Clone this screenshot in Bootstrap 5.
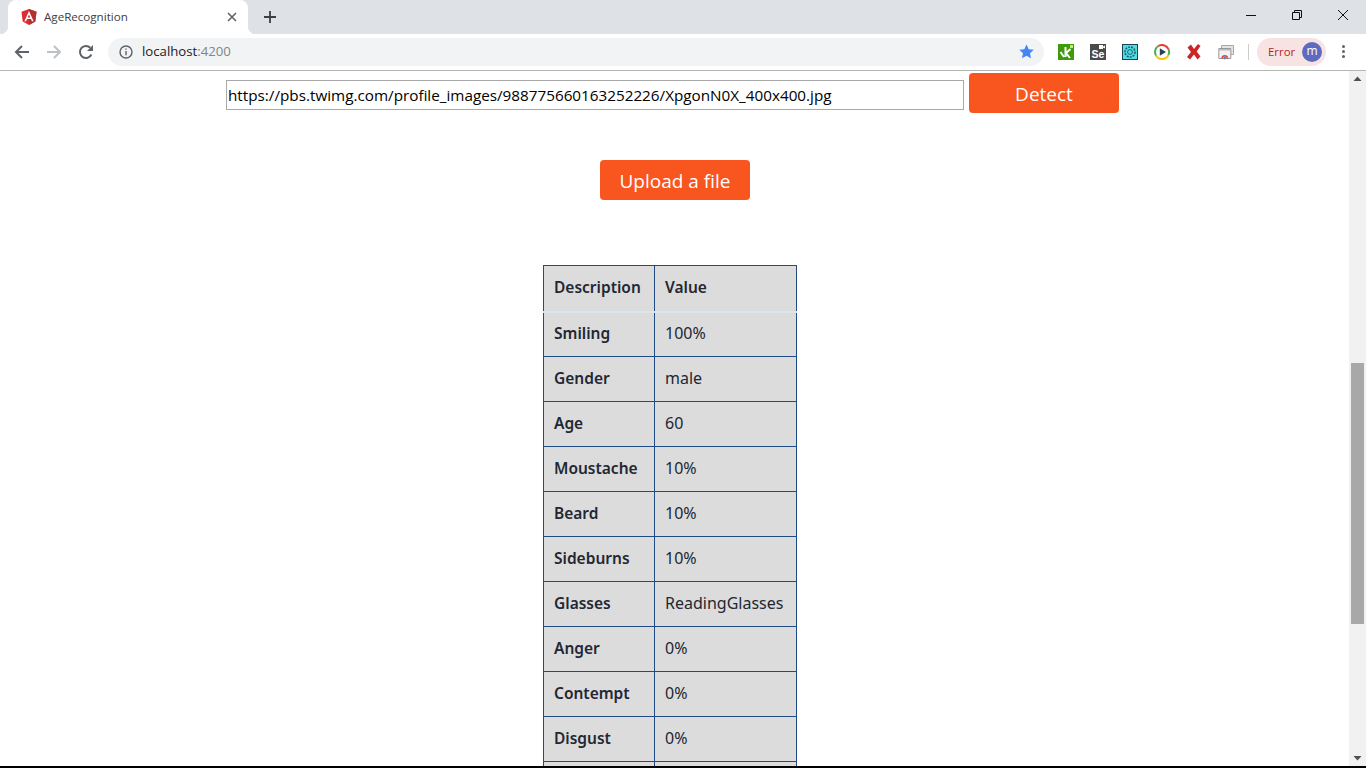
<!DOCTYPE html>
<html lang="en">
<head>
    <meta charset="UTF-8">
    <meta name="viewport" content="width=device-width, initial-scale=1.0">
    <title>AgeRecognition</title>
    <link href="https://cdn.jsdelivr.net/npm/bootstrap@5.3.0/dist/css/bootstrap.min.css" rel="stylesheet">
    <style>
        html, body { height: 768px; overflow: hidden; background: #fff; }
        body { font-family: "Open Sans", "Liberation Sans", sans-serif; }
        .tab-strip { height: 34px; background: #dee1e6; padding-left: 8px; }
        .tab-live { position: relative; width: 240px; height: 34px; background: #fff; border-radius: 8px 8px 0 0; padding: 0 11px 0 13px; font-size: 11.6px; color: #3c4043; }
        .tab-live::before, .tab-live::after { content: ""; position: absolute; bottom: 0; width: 8px; height: 8px; }
        .tab-live::before { left: -8px; background: radial-gradient(circle at 0 0, #dee1e6 8px, #fff 8.5px); }
        .tab-live::after { right: -8px; background: radial-gradient(circle at 100% 0, #dee1e6 8px, #fff 8.5px); }
        .tab-title { margin-left: 7px; }
        .tab-new { margin-left: 15px; }
        .win-btns { margin-left: auto; padding-right: 18px; gap: 36px; height: 30px; }
        .tool-bar { height: 37px; background: #fff; border-bottom: 1px solid #b5b5b5; padding: 0 0 1px 14px; }
        .nav-ico { width: 16px; height: 16px; margin-right: 16px; }
        .omni { width: 936px; height: 28px; margin-left: -2px; background: #f1f3f4; border-radius: 14px; padding: 0 10px 0 11px; font-size: 13.2px; color: #202124; }
        .omni-host { margin-left: 9px; }
        .omni-port { color: #80868b; }
        .omni-star { margin-left: auto; }
        .ext-row { margin-left: 14px; gap: 16px; }
        .ext-ico { width: 16px; height: 16px; display: block; }
        .ext-se { background: #4a4a4a; color: #fff; font: 700 10.5px/10px "Liberation Sans", sans-serif; text-align: center; padding-top: 1px; }
        .ext-cam { display: block; margin-left: auto; margin-right: 1px; }
        .tool-sep { width: 1px; height: 16px; background: #ccc; margin-left: 14px; }
        .err-pill { width: 69px; height: 28px; margin-left: 8px; background: #f8e3e3; border-radius: 14px; padding: 0 4px 0 11px; font-size: 11.4px; color: #b3261e; }
        .avatar { width: 20px; height: 20px; margin-left: auto; border-radius: 50%; background: #5c6bc0; color: #fff; font-size: 12px; line-height: 18px; text-align: center; }
        .menu-dots { margin-left: 16px; gap: 2px; }
        .menu-dots span { width: 3px; height: 3px; border-radius: 50%; background: #5f6368; }
        .view-area { height: 695px; overflow: hidden; }
        .page-body { width: 1349px; height: 695px; overflow: hidden; }
        .url-row { padding: 2px 0 0 226px; gap: 5px; }
        .url-input { width: 738px; height: 30px; margin-top: 7px; border: 1px solid #a9a9a9; padding: 0 1px; font-family: "Open Sans", sans-serif; font-size: 15.25px; color: #000; outline: 0; }
        .act-btn { width: 150px; height: 40px; padding: 2px 0 0; background: #f8551f; border: 0; border-radius: 4px; color: #fff; font-family: "Open Sans", sans-serif; font-size: 19px; line-height: 38px; }
        .upload-row { margin-top: 47px; padding-left: 1px; }
        .face-table { margin: 65px 0 0 543px; width: 254px; table-layout: fixed; border-collapse: collapse; font-family: "Noto Sans", sans-serif; font-size: 15.5px; color: #222733; }
        .face-table th, .face-table td { height: 45px; padding: 0 10px; background: #dcdcdc; border: 1px solid #1f4b87; white-space: nowrap; }
        .face-table th { font-weight: 600; }
        .face-table td { font-weight: 400; font-size: 16px; padding-bottom: 2px; }
        .face-table thead th { height: 46px; padding-bottom: 2px; border-bottom: 2px solid #dde5ec; }
        .face-table tbody tr:first-child th { padding-bottom: 2px; }
        .col-one { width: 111px; }
        .scroll-bar { width: 17px; background: #f1f1f1; padding: 0 2px; }
        .scroll-up, .scroll-down { height: 17px; }
        .scroll-gap { height: 275px; }
        .scroll-thumb { height: 261px; background: #a8a8a8; }
        .scroll-down { margin-top: auto; }
        .base-line { height: 2px; background: #000; }
    </style>
</head>
<body>
    <!-- browser tabs -->
    <div class="tab-strip d-flex align-items-start">
        <div class="tab-live d-flex align-items-center">
            <svg width="16" height="16" viewBox="0 0 16 16"><path fill="#dd2c35" d="M8 0 .5 2.7l1.2 9.9L8 16l6.3-3.4 1.2-9.9z"/><path fill="#b52e31" d="M8 0v16l6.3-3.4 1.2-9.9z"/><path fill="#fff" d="M8 2 3.4 12.2h1.7l.9-2.3h4l.9 2.3h1.7zm1.3 6.5H6.7L8 5.4z"/></svg>
            <span class="tab-title">AgeRecognition</span>
            <svg class="ms-auto" width="10" height="10" viewBox="0 0 10 10"><path stroke="#5f6368" stroke-width="1.6" d="m1 1 8 8M9 1 1 9"/></svg>
        </div>
        <svg class="tab-new mt-2" width="14" height="18" viewBox="0 0 14 18"><path stroke="#3c4043" stroke-width="1.8" d="M7 3v12M1 9h12"/></svg>
        <div class="win-btns d-flex align-items-center">
            <svg width="10" height="10" viewBox="0 0 10 10"><path stroke="#111" d="M0 5.5h10"/></svg>
            <svg width="10" height="10" viewBox="0 0 10 10"><path fill="none" stroke="#111" d="M.5 2.5h7v7h-7zM2.5 2.5v-2h7v7h-2"/></svg>
            <svg width="10" height="10" viewBox="0 0 10 10"><path stroke="#111" d="m0 0 10 10M10 0 0 10"/></svg>
        </div>
    </div>

    <!-- toolbar -->
    <div class="tool-bar d-flex align-items-center">
        <svg class="nav-ico" viewBox="0 0 16 16"><path fill="none" stroke="#5f6368" stroke-width="2" d="M15 8H2M8 2 2 8l6 6"/></svg>
        <svg class="nav-ico" viewBox="0 0 16 16"><path fill="none" stroke="#bdc1c6" stroke-width="2" d="M1 8h13M8 2l6 6-6 6"/></svg>
        <svg class="nav-ico" viewBox="0 0 16 16"><path fill="none" stroke="#5f6368" stroke-width="2" d="M13.4 10.5A6 6 0 1 1 12.3 3.8"/><path fill="#5f6368" d="M15 1v6H9z"/></svg>
        <div class="omni d-flex align-items-center">
            <svg width="14" height="14" viewBox="0 0 14 14"><circle cx="7" cy="7" r="6" fill="none" stroke="#5f6368" stroke-width="1.4"/><path stroke="#5f6368" stroke-width="1.4" d="M7 6v4.2M7 3.4v1.4"/></svg>
            <span class="omni-host">localhost<span class="omni-port">:4200</span></span>
            <svg class="omni-star" width="15" height="15" viewBox="0 0 16 16"><path fill="#4285f4" d="m8 .5 2.3 5 5.4.6-4 3.7 1.1 5.4L8 12.5l-4.8 2.7 1.1-5.4-4-3.7 5.4-.6z"/></svg>
        </div>
        <div class="ext-row d-flex align-items-center">
            <svg class="ext-ico" viewBox="0 0 16 16"><rect width="16" height="16" fill="#3f9a0e"/><path fill="none" stroke="#fff" stroke-width="2" d="m2.5 8 3.5 5M7.5 3v10M12.5 5 8 9l4 5"/><rect x="12" y="1" width="3" height="3" fill="#b8f26a"/></svg>
            <div class="ext-ico ext-se">
                <svg class="ext-cam" width="6" height="4" viewBox="0 0 6 4"><path fill="#fff" d="M0 0h4v4H0zM4 1.500 6 .5v3L4 2.500z"/></svg>
                Se
            </div>
            <svg class="ext-ico" viewBox="0 0 16 16"><rect x=".5" y=".5" width="15" height="15" fill="#4fdde6" stroke="#1c3f4f"/><circle cx="8" cy="8" r="5" fill="none" stroke="#1f5f6f" stroke-width="1.6" stroke-dasharray="2 1"/><circle cx="8" cy="8" r="2.4" fill="none" stroke="#1f5f6f"/></svg>
            <svg class="ext-ico" viewBox="0 0 16 16"><path fill="none" stroke="#e94235" stroke-width="2" d="M4 2.3A7 7 0 0 1 14.4 5"/><path fill="none" stroke="#f9c80e" stroke-width="2" d="M14.4 11A7 7 0 0 1 2 11.5"/><path fill="none" stroke="#4caf50" stroke-width="2" d="M2 11.5A7 7 0 0 1 4 2.3M14.4 5a7 7 0 0 1 0 6"/><path fill="#2d4159" d="M5.800 4.200 12 8l-6.200 3.800z"/></svg>
            <svg class="ext-ico" viewBox="0 0 16 16"><path fill="#cc2427" d="M1.500 3.500 5 .5l3 4.500 4-5 2.500 2-3.800 5.500 3.800 5-3 3L8 10.500 4 15.500l-3-2.500 4-5z"/></svg>
            <svg class="ext-ico" viewBox="0 0 16 16"><path fill="#e4e4e4" stroke="#a8a8a8" d="M3.500 1.500h12v9h-12z"/><path fill="#f2f2f2" stroke="#999" d="M.8 4.500h12v10h-12z"/><path fill="#bbb" d="M1 5h11.500v1.500H1z"/><path fill="#e94235" d="M3.300 14.500a3.500 3.500 0 0 1 7 0H8.700a1.900 1.900 0 0 0-3.800 0z"/><circle cx="6.800" cy="14" r="1.400" fill="#4285f4"/></svg>
        </div>
        <div class="tool-sep"></div>
        <div class="err-pill d-flex align-items-center">
            <span>Error</span>
            <span class="avatar">m</span>
        </div>
        <div class="menu-dots d-flex flex-column">
            <span></span><span></span><span></span>
        </div>
    </div>

    <!-- page -->
    <div class="view-area d-flex">
        <div class="page-body">
            <div class="url-row d-flex align-items-start">
                <input class="url-input" type="text" value="https://pbs.twimg.com/profile_images/988775660163252226/XpgonN0X_400x400.jpg">
                <button class="act-btn" type="button">Detect</button>
            </div>
            <div class="upload-row d-flex justify-content-center">
                <button class="act-btn" type="button">Upload a file</button>
            </div>
            <table class="face-table">
                <thead>
                    <tr><th class="col-one">Description</th><th>Value</th></tr>
                </thead>
                <tbody>
                    <tr><th>Smiling</th><td>100%</td></tr>
                    <tr><th>Gender</th><td>male</td></tr>
                    <tr><th>Age</th><td>60</td></tr>
                    <tr><th>Moustache</th><td>10%</td></tr>
                    <tr><th>Beard</th><td>10%</td></tr>
                    <tr><th>Sideburns</th><td>10%</td></tr>
                    <tr><th>Glasses</th><td>ReadingGlasses</td></tr>
                    <tr><th>Anger</th><td>0%</td></tr>
                    <tr><th>Contempt</th><td>0%</td></tr>
                    <tr><th>Disgust</th><td>0%</td></tr>
                    <tr><th>&nbsp;</th><td>&nbsp;</td></tr>
                </tbody>
            </table>
        </div>
        <div class="scroll-bar d-flex flex-column">
            <svg class="scroll-up" viewBox="0 0 13 17"><path fill="#505050" d="M6.500 5.500 10.500 10h-8z"/></svg>
            <div class="scroll-gap"></div>
            <div class="scroll-thumb"></div>
            <svg class="scroll-down" viewBox="0 0 13 17"><path fill="#505050" d="M2.500 7h8l-4 4.500z"/></svg>
        </div>
    </div>
    <div class="base-line"></div>

    <script src="https://cdn.jsdelivr.net/npm/bootstrap@5.3.0/dist/js/bootstrap.bundle.min.js"></script>
</body>
</html>
